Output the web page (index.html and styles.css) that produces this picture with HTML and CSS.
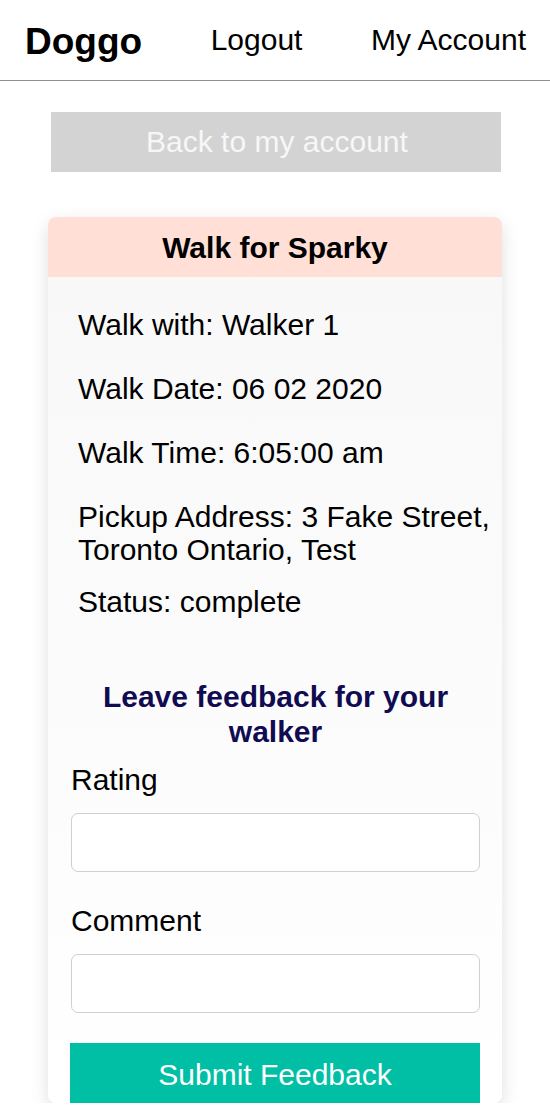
FILE: index.html
```html
<!DOCTYPE html>
<html>
<head>
<meta charset="utf-8">
<link rel="stylesheet" href="styles.css">
</head>
<body>
<header class="topbar">
  <span class="brand">Doggo</span>
  <a class="nav-link">Logout</a>
  <a class="nav-link">My Account</a>
</header>
<main class="page">
  <button class="back-btn">Back to my account</button>
  <section class="card">
    <div class="card-head">Walk for Sparky</div>
    <div class="card-body">
      <div class="details">
        <p class="row">Walk with: Walker 1</p>
        <p class="row">Walk Date: 06 02 2020</p>
        <p class="row">Walk Time: 6:05:00 am</p>
        <p class="row row-addr">Pickup Address: 3 Fake Street, Toronto Ontario, Test</p>
        <p class="row row-last">Status: complete</p>
      </div>
      <form class="feedback">
        <h2 class="fb-title">Leave feedback for your walker</h2>
        <label class="fb-label">Rating</label>
        <input class="fb-input" type="text">
        <label class="fb-label fb-label-2">Comment</label>
        <input class="fb-input" type="text">
        <button class="submit-btn" type="button">Submit Feedback</button>
      </form>
    </div>
  </section>
</main>
</body>
</html>
```
FILE: styles.css
```css
* { box-sizing: border-box; }
html, body {
  margin: 0;
  padding: 0;
  background: #fff;
  font-family: "Liberation Sans", Arial, Helvetica, sans-serif;
  color: #000;
  overflow: hidden;
}
.topbar {
  height: 81px;
  display: flex;
  align-items: center;
  justify-content: space-between;
  padding: 0 24px 0 25px;
  border-bottom: 1px solid #8f8f8f;
}
.brand {
  font-size: 37px;
  font-weight: bold;
  position: relative;
  top: 2px;
}
.nav-link {
  font-size: 30px;
  color: #000;
  text-decoration: none;
}
.page {
  display: flex;
  flex-direction: column;
  align-items: center;
  padding-top: 31px;
}
.back-btn {
  width: 450px;
  height: 60px;
  margin-left: 2px;
  background: #d3d3d3;
  border: none;
  color: #f7f7f7;
  font-family: inherit;
  font-size: 30px;
  padding: 0 0 0 2px;
}
.card {
  margin-top: 45px;
  width: 454px;
  border-radius: 8px;
  overflow: hidden;
  box-shadow: 0 6px 18px rgba(0,0,0,0.13);
  background: #fff;
}
.card-head {
  height: 60px;
  background: #ffdfd6;
  display: flex;
  align-items: center;
  justify-content: center;
  font-size: 30px;
  font-weight: bold;
  padding-top: 2px;
}
.card-body {
  background: linear-gradient(#f8f8f8, #fff);
}
.details {
  padding: 31px 10px 0 30px;
}
.row {
  margin: 0 0 31px;
  font-size: 30px;
  line-height: 33px;
}
.row-addr { margin-top: 2px; margin-bottom: 19px; }
.row-last { margin-bottom: 0; }
.feedback {
  display: flex;
  flex-direction: column;
  padding: 61px 22px 0 23px;
}
.fb-title {
  margin: 0 0 14px;
  text-align: center;
  color: #110b52;
  font-size: 30px;
  line-height: 35px;
  font-weight: bold;
}
.fb-label {
  font-size: 30px;
  line-height: 33px;
  margin-bottom: 17px;
}
.fb-label-2 { margin-top: 32px; }
.fb-input {
  height: 59px;
  border: 1.5px solid #d0d0d0;
  border-radius: 7px;
  background: #fff;
  font-size: 20px;
}
.submit-btn {
  margin-top: 30px;
  margin-left: -1px;
  height: 60px;
  background: #00bfa5;
  border: none;
  color: #fff;
  font-family: inherit;
  font-size: 30px;
  padding: 3px 0 0;
}
```
